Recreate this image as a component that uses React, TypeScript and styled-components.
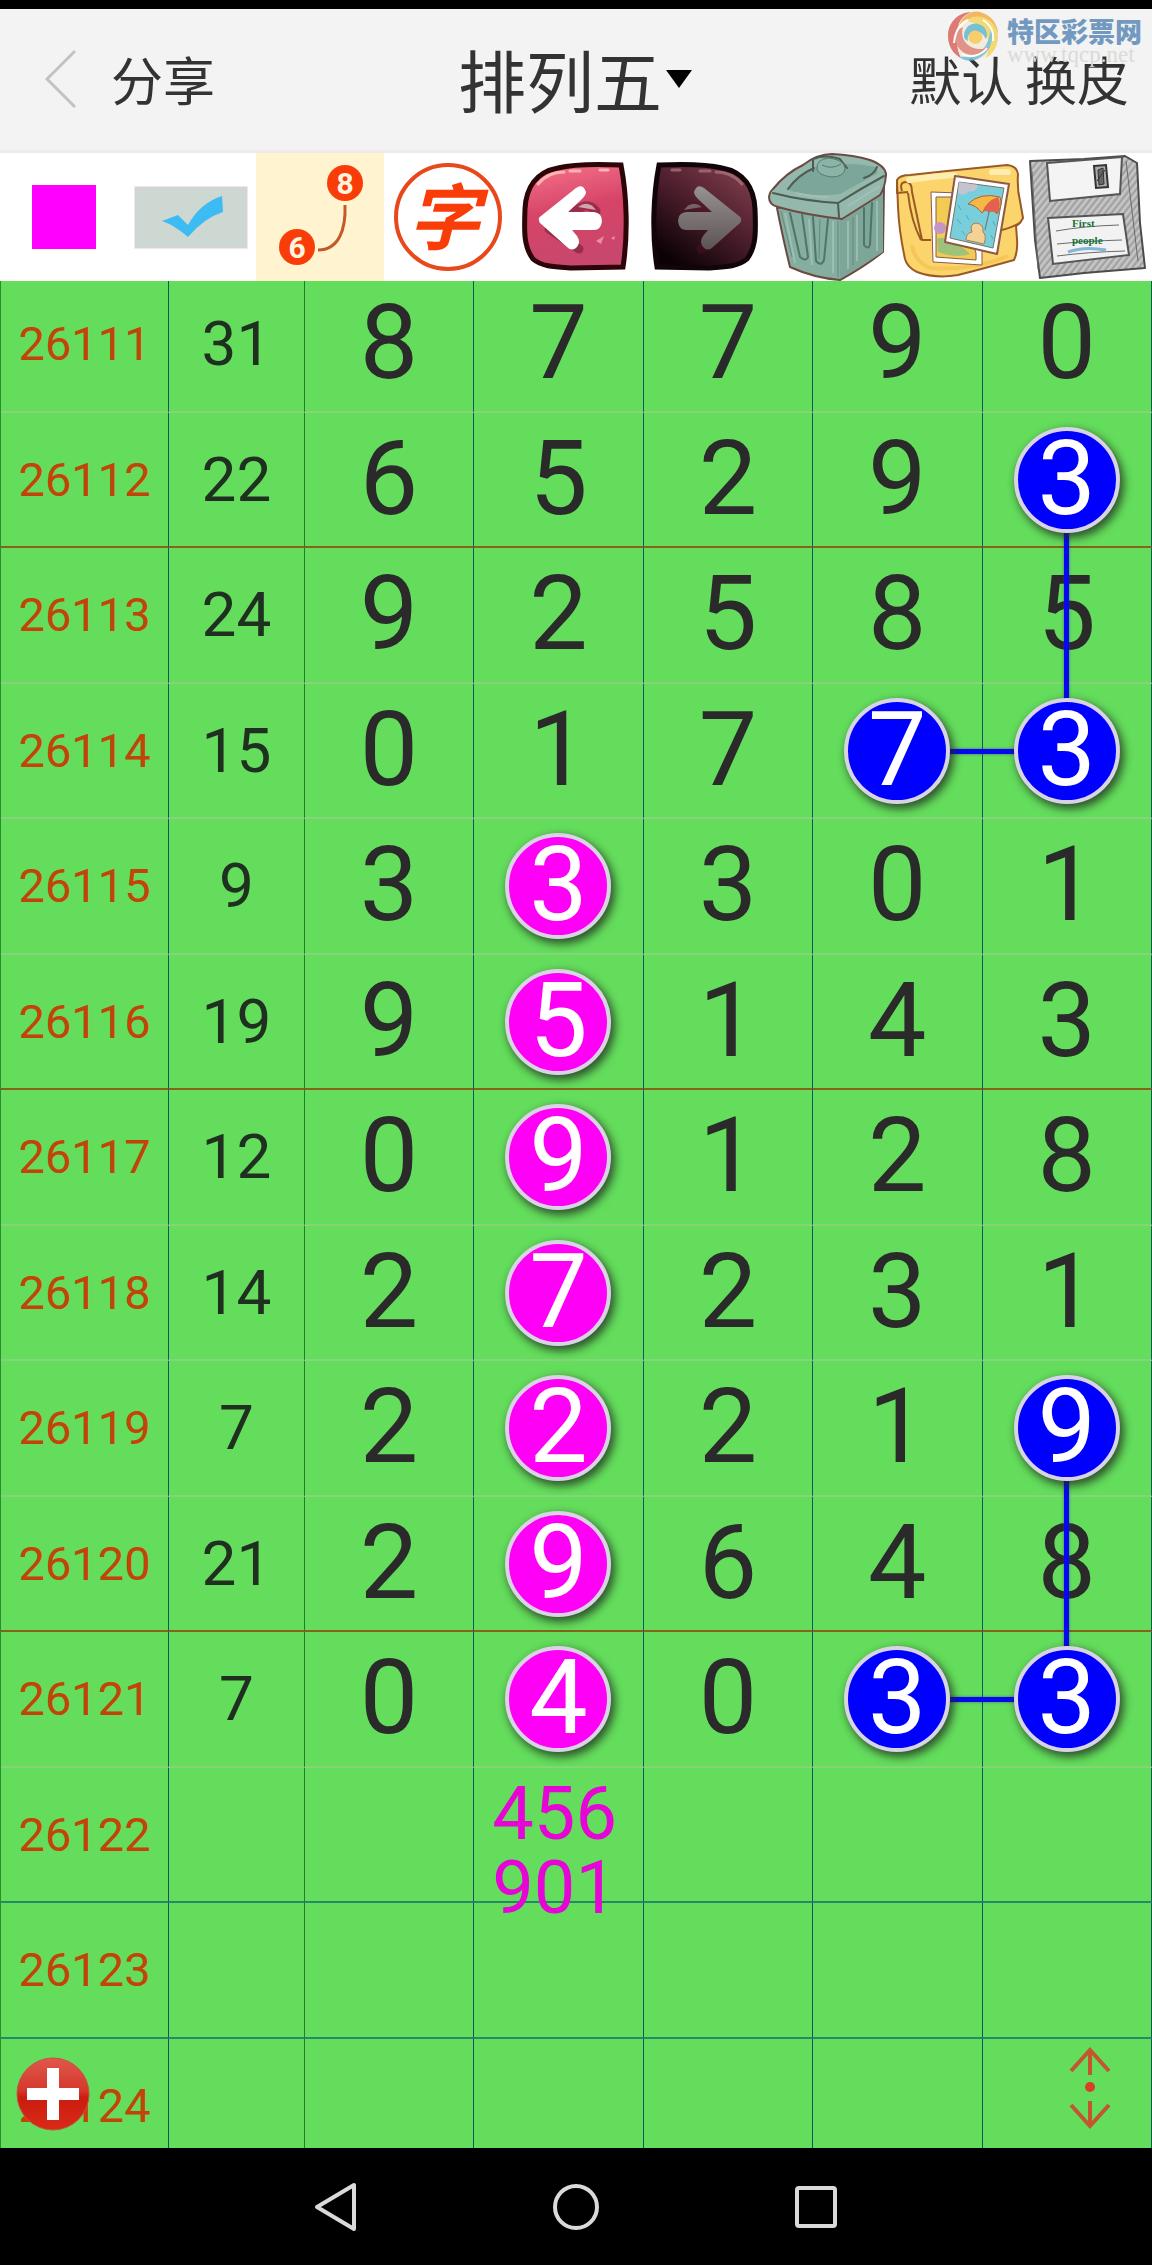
import React from "react";
import styled, { createGlobalStyle, css } from "styled-components";

const cjk = `"Noto Sans CJK SC", "Noto Sans", sans-serif`;
const numeric = `Roboto, "Noto Sans CJK SC", sans-serif`;

const GlobalStyle = createGlobalStyle`
  *, *::before, *::after { box-sizing: border-box; }
  html, body { margin: 0; background: #000; }
  button { margin: 0; padding: 0; border: 0; background: none; font: inherit; color: inherit; cursor: pointer; }
  svg { display: block; }
`;

const Screen = styled.div`
  display: flex;
  flex-direction: column;
  height: 100vh;
  padding-top: 9px;
  background: #000;
  color: #333;
  font-family: ${cjk};
`;

const Header = styled.header`
  position: relative;
  display: grid;
  grid-template-columns: 1fr auto 1fr;
  align-items: center;
  height: 144px;
  flex: none;
  padding: 0 23px 4px 45px;
  background: #f3f3f3;
  box-shadow: inset 0 -3px 0 #ebebeb;
  font-size: 52px;
  line-height: 64px;
`;

const HeaderSide = styled.div<{ $end?: boolean }>`
  display: flex;
  align-items: center;
  gap: 34px;
  justify-content: ${(p) => (p.$end ? "flex-end" : "flex-start")};
`;

const Title = styled.h1`
  margin: 0 24px 0 0;
  font-size: 68px;
  font-weight: 400;
  line-height: 80px;
`;

const TitleButton = styled.button`
  display: flex;
  align-items: center;
  gap: 4px;
`;

const Watermark = styled.div`
  position: absolute;
  top: 0;
  right: 10px;
  display: flex;
  gap: 8px;
  pointer-events: none;
`;

const WatermarkText = styled.div`
  display: flex;
  flex-direction: column;
  padding-top: 8px;
`;

const WatermarkName = styled.span`
  font-size: 27px;
  font-weight: 900;
  line-height: 28px;
  color: #7299bf;
`;

const WatermarkUrl = styled.span`
  font-family: "Liberation Serif", serif;
  font-size: 23px;
  line-height: 20px;
  color: #dadada;
`;

const Toolbar = styled.div`
  display: grid;
  grid-template-columns: repeat(9, 1fr);
  flex: none;
  background: #fff;
`;

const Tool = styled.button<{ $active?: boolean }>`
  background: ${(p) => (p.$active ? "#fff4cf" : "#fff")};
  svg { width: 100%; height: auto; }
`;

const Board = styled.main`
  position: relative;
  flex: 1;
  min-height: 0;
  overflow: hidden;
  background: #64dd5c;
  font-family: ${numeric};
`;

const Chart = styled.table`
  width: 100%;
  margin-top: -4px;
  table-layout: fixed;
  border-collapse: separate;
  border-spacing: 0;
  border-left: 1px solid #2a8f2a;
`;

const IssueCol = styled.col`
  width: 14.6%;
`;
const SumCol = styled.col`
  width: 11.8%;
`;

type Rule = "light" | "brown" | "teal";
const ruleColor: Record<Rule, string> = {
  light: "#86d37c",
  brown: "#85641a",
  teal: "#25896a",
};

const Row = styled.tr<{ $rule: Rule }>`
  height: 135px;
  &:nth-child(odd) { height: 136px; }
  > * { border-bottom: 2px solid ${(p) => ruleColor[p.$rule]}; }
`;

const cell = css`
  position: relative;
  padding: 0;
  text-align: center;
  vertical-align: middle;
  font-weight: 450;
  border-right: 1px solid #0f5a60;
`;

const Issue = styled.th`
  ${cell}
  font-size: 47px;
  line-height: 48px;
  color: #c24408;
`;

const Sum = styled.td`
  ${cell}
  font-size: 62px;
  line-height: 64px;
  color: #203020;
  border-right-color: #1f7d2b;
`;

const Digit = styled.td`
  ${cell}
  font-size: 104px;
  line-height: 104px;
  color: #2a2a2a;
`;

const Plain = styled.span`
  display: block;
  padding-bottom: 2px;
`;

const Ball = styled.span<{ $color: string }>`
  position: relative;
  z-index: 2;
  display: flex;
  justify-content: center;
  width: 106px;
  height: 106px;
  margin: 0 auto;
  border: 4px solid #d9d3e6;
  border-radius: 50%;
  background: ${(p) => p.$color};
  box-shadow: 3px 4px 8px 1px rgba(30, 40, 30, 0.75);
  color: #fff;
  line-height: 95px;
`;

const Link = styled.span<{ $dir: "down" | "right" }>`
  position: absolute;
  z-index: 1;
  background: #0808ee;
  box-shadow: 0 0 3px rgba(40, 60, 160, 0.7);
  ${(p) =>
    p.$dir === "down"
      ? css`top: 50%; left: calc(50% - 3px); width: 5px; height: 200%;`
      : css`left: 50%; top: calc(50% - 2px); height: 5px; width: 100%;`}
`;

const Note = styled.p`
  position: absolute;
  z-index: 2;
  top: 9px;
  left: 18px;
  margin: 0;
  text-align: left;
  font-size: 74px;
  line-height: 74px;
  color: #e604d6;
`;

const FloatingButton = styled.button<{ $side: "left" | "right" }>`
  position: absolute;
  z-index: 3;
  bottom: 16px;
  ${(p) => (p.$side === "left" ? css`left: 15px;` : css`right: 40px;`)}
`;

const NavBar = styled.nav`
  display: flex;
  flex: none;
  justify-content: center;
  align-items: center;
  height: 117px;
  background: #000;
`;

const NavButton = styled.button`
  display: flex;
  justify-content: center;
  align-items: center;
  width: 240px;
  height: 100%;
`;

type RowData = { issue: string; sum?: number; digits?: string };

const rows: RowData[] = [
  { issue: "26111", sum: 31, digits: "87790" },
  { issue: "26112", sum: 22, digits: "65293" },
  { issue: "26113", sum: 24, digits: "92585" },
  { issue: "26114", sum: 15, digits: "01773" },
  { issue: "26115", sum: 9, digits: "33301" },
  { issue: "26116", sum: 19, digits: "95143" },
  { issue: "26117", sum: 12, digits: "09128" },
  { issue: "26118", sum: 14, digits: "27231" },
  { issue: "26119", sum: 7, digits: "22219" },
  { issue: "26120", sum: 21, digits: "29648" },
  { issue: "26121", sum: 7, digits: "04033" },
  { issue: "26122" },
  { issue: "26123" },
  { issue: "26124" },
];

const MAGENTA = "#ff00f6";
const BLUE = "#0000ff";

const balls: Record<string, string> = {
  "26112:4": BLUE,
  "26114:3": BLUE,
  "26114:4": BLUE,
  "26115:1": MAGENTA,
  "26116:1": MAGENTA,
  "26117:1": MAGENTA,
  "26118:1": MAGENTA,
  "26119:1": MAGENTA,
  "26120:1": MAGENTA,
  "26121:1": MAGENTA,
  "26119:4": BLUE,
  "26121:3": BLUE,
  "26121:4": BLUE,
};

const links: Record<string, "down" | "right"> = {
  "26112:4": "down",
  "26114:3": "right",
  "26119:4": "down",
  "26121:3": "right",
};

const ruleFor = (i: number): Rule => (i > 10 ? "teal" : i % 4 === 1 ? "brown" : "light");

const SwirlLogo = () => (
  <svg width="52" height="54" viewBox="0 0 52 54" aria-hidden="true" opacity="0.85">
    <circle cx="26" cy="27" r="24" fill="#f6ead8" />
    <path d="M24 3C9 4 1 15 1 27c0 10 5 18 13 22-5-10-5-19 1-27C8 20 12 8 24 3Z" fill="#d9675e" />
    <path d="M12 17C15 7 24 1 33 3c12 3 18 13 18 22-4-10-11-16-21-16-8 0-14 3-18 8Z" fill="#f4ad4c" />
    <path d="M25 8c13-3 26 6 26 20 0 9-5 17-12 21 4-10 4-22-4-30-4-4-8-6-14-6Z" fill="#f3d55e" />
    <path d="M44 19c4 13-2 27-16 32-6 2-12 0-16-3 11 0 22-3 27-12 3-6 4-11 5-17Z" fill="#6fbfd2" />
    <path d="M9 22c-3 12 4 24 17 24 7 0 13-3 17-8-8 3-16 3-22-2-5-4-7-11-5-18Z" fill="#df8378" />
    <path d="M17 27c0-8 7-14 14-12 7 1 11 9 8 15-3-6-8-9-13-7-4 1-6 5-5 9-3-1-4-3-4-5Z" fill="#61b9cf" />
    <path d="M22 31c-2-6 3-11 8-9 5 1 7 6 4 10-3 4-9 4-12-1Z" fill="#f7c955" />
    <path d="M7 34c1-10 5-19 14-23M15 45c8 5 20 1 25-6M36 11c8 5 11 13 10 21" fill="none" stroke="#fff" strokeWidth="2" />
  </svg>
);

const Swatch = () => (
  <svg viewBox="0 0 128 128" aria-hidden="true">
    <rect x="32" y="32" width="64" height="64" fill="#ff00ff" />
  </svg>
);

const Tick = () => (
  <svg viewBox="0 0 128 128" aria-hidden="true">
    <rect x="8" y="35" width="110" height="59" fill="#ced8d2" stroke="#d3d3d8" strokeWidth="3" />
    <path d="M34 68 50 62 60 72Q72 50 94 43L95 59Q76 65 60 84Q46 72 34 68Z" fill="#3cbcf2" />
  </svg>
);

const LinkTool = () => (
  <svg viewBox="0 0 128 128" aria-hidden="true">
    <path d="M89 52C90 76 83 97 62 97" fill="none" stroke="#c45a2c" strokeWidth="3" />
    <g fill="#f93d08">
      <circle cx="89" cy="30" r="18" />
      <circle cx="41" cy="94" r="18" />
    </g>
    <g fill="#fff4e0" fontFamily="Roboto, sans-serif" fontWeight="700" fontSize="30" textAnchor="middle">
      <text x="89" y="41">8</text>
      <text x="41" y="105">6</text>
    </g>
  </svg>
);

const WordTool = () => (
  <svg viewBox="0 0 128 128" aria-hidden="true">
    <circle cx="64" cy="64" r="52" fill="#fff" stroke="#e8481a" strokeWidth="4" />
    <text
      x="60"
      y="91"
      fill="#f93d08"
      fontFamily="Noto Sans CJK SC, sans-serif"
      fontWeight="700"
      fontStyle="italic"
      fontSize="72"
      textAnchor="middle"
    >
      字
    </text>
  </svg>
);

const ArrowTool = ({ forward }: { forward?: boolean }) => {
  const id = forward ? "fwd" : "back";
  return (
    <svg viewBox="0 0 128 128" aria-hidden="true">
      <defs>
        <linearGradient id={`${id}-face`} x1="0" y1="0" x2={forward ? "0.7" : "0.2"} y2="1">
          <stop offset="0" stopColor={forward ? "#8a4552" : "#f8748c"} />
          <stop offset="0.5" stopColor={forward ? "#50202f" : "#d64468"} />
          <stop offset="1" stopColor={forward ? "#0c0205" : "#c8476c"} />
        </linearGradient>
        <linearGradient id={`${id}-arrow`} x1="0" y1="0" x2="0" y2="1">
          <stop offset="0" stopColor={forward ? "#979292" : "#fff"} />
          <stop offset="1" stopColor={forward ? "#5d5355" : "#fff"} />
        </linearGradient>
      </defs>
      <g transform={forward ? "translate(128 0) scale(-1 1)" : undefined}>
        <path
          d="M109 12C86 11 62 11 46 15C24 19 14 35 13 56C12 80 12 94 21 106C30 114 44 114 60 115L111 114C116 82 115 43 109 12Z"
          fill={`url(#${id}-face)`}
          stroke={forward ? "#120509" : "#2b0508"}
          strokeWidth="5"
        />
        <path d="M26 31Q36 19 52 19M58 18H68M88 17H96" fill="none" stroke={forward ? "#a87078" : "#ffc9bd"} strokeWidth="3" strokeLinecap="round" opacity="0.8" />
        <path d="M37 76 67 96M60 62Q74 46 84 58" fill="none" stroke="#531226" strokeWidth="9" strokeLinecap="round" opacity="0.45" />
        <path d="M66 54Q76 46 84 57Z" fill={forward ? "#756366" : "#cfa5ab"} />
        <path
          d="M27 67Q26 65 29 63L64 35Q71 30 74 39Q74 42 70 46L56 59H82Q90 60 90 68Q89 77 82 77H60L65 83Q69 89 65 94Q60 99 55 94L28 70Q27 69 27 67Z"
          fill={`url(#${id}-arrow)`}
        />
        {!forward && <path d="M84 88l8-5-3 8ZM99 85l4-2-1 4Z" fill="#ffa9b5" opacity="0.7" />}
      </g>
    </svg>
  );
};

const TrashTool = () => (
  <svg viewBox="0 0 128 128" aria-hidden="true">
    <g stroke="#6b4a42" strokeWidth="2" strokeLinejoin="round">
      <path d="M9 55Q16 90 22 114Q46 125 72 127Q96 114 115 99L116 32Z" fill="#85ada0" />
      <path d="M72 65V126L115 99V34Z" fill="#7da598" stroke="none" />
      <path d="M5 36Q18 20 35 12Q49 1 64 1Q86 2 102 7Q118 13 118 22Q117 35 112 42L74 66Q38 62 10 54Q1 52 1 44Q2 38 5 36Z" fill="#94b9ac" />
    </g>
    <path d="M20 37Q28 22 50 13Q80 8 108 14L110 20Q92 30 72 41Q44 45 20 37Z" fill="#7ca699" />
    <g fill="none" stroke="#4d5c52" strokeWidth="2" strokeLinecap="round" strokeLinejoin="round">
      <path d="M5 40Q36 48 70 50Q92 36 116 23M70 50 71 64M20 36Q30 22 46 15M109 14Q106 22 96 25" />
      <path d="M45 18V6Q58 1 72 6L79 15" />
    </g>
    <path d="M49 16Q48 6 61 5Q77 7 77 16Q76 24 63 24Q50 22 49 16Z" fill="#8bb3a7" stroke="#597a6e" strokeWidth="1" />
    <path d="M54 12Q64 17 73 11" fill="none" stroke="#597a6e" strokeWidth="1" />
    <g fill="none" stroke="#4f756a" strokeWidth="2" strokeLinecap="round">
      <path d="M22 60 32 104Q38 109 40 104L34 61M45 64 48 108Q53 114 56 107L60 66M96 55V92Q100 97 102 92L104 50" />
    </g>
    <g fill="none" stroke="#a5c6ba" strokeWidth="2" opacity="0.7">
      <path d="M17 60 27 110M41 66 44 112M65 68V120M80 68V116M89 62V108M109 48V98M80 53 112 33M28 40Q46 44 60 44" />
    </g>
    <path d="M70 68V124M85 64V112M13 58 24 104M52 66 51 106" fill="none" stroke="#64897e" strokeWidth="1" />
  </svg>
);

const PhotosTool = () => (
  <svg viewBox="0 0 128 128" aria-hidden="true">
    <g stroke="#9a5a26" strokeWidth="2" strokeLinejoin="round">
      <path d="M1 27Q4 22 14 22L51 18Q82 15 111 12Q121 13 122 21Q121 36 124 48L127 65Q124 71 120 73L121 86Q122 99 118 107Q86 116 62 122Q40 126 21 119Q11 114 9 106Q3 78 2 54Z" fill="#fbd56b" />
      <path d="M1 27Q0 34 1 40L12 39M6 38Q3 29 10 29Q16 29 16 39Q22 68 26 87L35 87M12 40Q15 68 25 87M106 77Q118 74 125 69" fill="none" />
    </g>
    <path d="M13 27Q40 23 58 22M96 19H112" fill="none" stroke="#ffedb0" strokeWidth="6" strokeLinecap="round" />
    <path d="M16 92Q18 108 34 115Q76 118 112 103" fill="none" stroke="#f3bd4b" strokeWidth="4" opacity="0.6" />
    <path d="M35 39 64 40 86 96 86 112 37 109Z" fill="#fff" stroke="#8c5a46" strokeWidth="1" />
    <path d="M40 44H62L80 100V107L40 104Z" fill="#f2cb52" stroke="#8c5a46" strokeWidth="1" />
    <circle cx="44" cy="75" r="6" fill="#c596c3" />
    <path d="M41 86Q48 82 54 91Q66 92 74 101Q60 106 42 99Z" fill="#9fc27a" />
    <path d="M59 23 113 31 101 101 49 89Z" fill="#fff" stroke="#8c5a46" strokeWidth="2" strokeLinejoin="round" />
    <path d="M63 29 108 35 97 95 54 85Z" fill="#79cedb" stroke="#7d7166" strokeWidth="1" />
    <path d="M63 29 82 32Q80 40 73 38Q68 44 62 40Z" fill="#c3c4d0" />
    <path d="M72 51Q84 39 104 44Q107 52 101 61Q97 56 93 59Q89 55 86 60Q80 52 72 51Z" fill="#f5b845" stroke="#a8643a" strokeWidth="1" />
    <path d="M102 44Q106 52 101 61Q97 56 93 59Q89 55 86 60Q90 48 102 44Z" fill="#e4614f" />
    <path d="M93 59 89 77" stroke="#6b6f68" strokeWidth="1" />
    <path d="M70 87Q70 80 76 79Q73 71 80 70Q88 71 87 79Q91 82 88 91Z" fill="#f4d195" stroke="#a9804d" strokeWidth="1" />
    <path d="M62 52l3 5M61 66l4 5M70 62l3 5M66 78l3 4M97 68l2 5M95 82l2 4" stroke="#4eabc0" strokeWidth="1" />
  </svg>
);

const DiskTool = () => (
  <svg viewBox="0 0 128 128" aria-hidden="true">
    <defs>
      <pattern id="hatch" width="5" height="5" patternUnits="userSpaceOnUse" patternTransform="rotate(38)">
        <rect width="5" height="5" fill="#bababa" />
        <path d="M1 0V5" stroke="#8a8a8a" strokeWidth="1" />
        <path d="M3 0V5" stroke="#d2d2d2" strokeWidth="1" />
      </pattern>
    </defs>
    <path d="M6 8 60 6 101 3 113 10 116 70 121 115 60 120 16 125 11 87Z" fill="url(#hatch)" stroke="#4c4c4c" strokeWidth="2" strokeLinejoin="round" />
    <path d="M23 10 98 4 96 41 26 48Z" fill="#f4f4f4" stroke="#555" strokeWidth="2" />
    <path d="M70 13 82 12 84 34 72 35Z" fill="#aaa" stroke="#333" strokeWidth="2" />
    <path d="M74 17 79 15 80 31 75 32ZM73 28 81 17" fill="#666" stroke="#333" strokeWidth="1" />
    <path d="M24 65 99 61 105 102 29 111Z" fill="#f2f2f2" stroke="#555" strokeWidth="2" />
    <path d="M32 78Q60 73 95 72M33 91Q62 88 98 87M33 103Q64 99 101 98M8 18 14 116M102 8 114 108" fill="none" stroke="#6a6a6a" strokeWidth="1" />
    <path d="M44 99Q60 93 82 97" fill="none" stroke="#84b5dd" strokeWidth="3" />
    <g fill="#14733a" fontFamily="Liberation Serif, serif" fontWeight="700" fontSize="11">
      <text x="48" y="74">First</text>
      <text x="48" y="91">people</text>
    </g>
  </svg>
);

const tools = [
  { name: "颜色", icon: <Swatch /> },
  { name: "确认", icon: <Tick /> },
  { name: "连线", icon: <LinkTool />, active: true },
  { name: "文字", icon: <WordTool /> },
  { name: "撤销", icon: <ArrowTool /> },
  { name: "重做", icon: <ArrowTool forward /> },
  { name: "清空", icon: <TrashTool /> },
  { name: "相册", icon: <PhotosTool /> },
  { name: "保存", icon: <DiskTool /> },
];

const positions = [0, 1, 2, 3, 4];

export default function App() {
  return (
    <>
      <GlobalStyle />
      <Screen>
        <Header>
          <HeaderSide>
            <button aria-label="返回">
              <svg width="32" height="60" viewBox="0 0 32 60" fill="none" stroke="#c2c2c2" strokeWidth="3">
                <path d="M30 2 2 30 30 58" />
              </svg>
            </button>
            <button>分享</button>
          </HeaderSide>
          <Title>
            <TitleButton>
              排列五
              <svg width="26" height="18" viewBox="0 0 26 18" aria-hidden="true">
                <path d="M0 0H26L13 18Z" fill="#000" />
              </svg>
            </TitleButton>
          </Title>
          <HeaderSide $end>
            <button>默认 换皮</button>
          </HeaderSide>
          <Watermark>
            <SwirlLogo />
            <WatermarkText>
              <WatermarkName>特区彩票网</WatermarkName>
              <WatermarkUrl>www.tqcp.net</WatermarkUrl>
            </WatermarkText>
          </Watermark>
        </Header>

        <Toolbar role="toolbar">
          {tools.map((t) => (
            <Tool key={t.name} aria-label={t.name} $active={t.active}>
              {t.icon}
            </Tool>
          ))}
        </Toolbar>

        <Board>
          <Chart>
            <colgroup>
              <IssueCol />
              <SumCol />
              {positions.map((p) => (
                <col key={p} />
              ))}
            </colgroup>
            <tbody>
              {rows.map((row, i) => (
                <Row key={row.issue} $rule={ruleFor(i)}>
                  <Issue scope="row">{row.issue}</Issue>
                  <Sum>{row.sum}</Sum>
                  {positions.map((p) => {
                    const key = `${row.issue}:${p}`;
                    const value = row.digits?.[p];
                    return (
                      <Digit key={p}>
                        {links[key] && <Link $dir={links[key]} />}
                        {value && (balls[key] ? <Ball $color={balls[key]}>{value}</Ball> : <Plain>{value}</Plain>)}
                        {key === "26122:1" && (
                          <Note>
                            456
                            <br />
                            901
                          </Note>
                        )}
                      </Digit>
                    );
                  })}
                </Row>
              ))}
            </tbody>
          </Chart>

          <FloatingButton $side="left" aria-label="添加">
            <svg width="76" height="76" viewBox="0 0 76 76">
              <defs>
                <linearGradient id="plus" x1="0" y1="0" x2="0" y2="1">
                  <stop offset="0" stopColor="#e0574c" />
                  <stop offset="0.45" stopColor="#d5382b" />
                  <stop offset="0.55" stopColor="#cb1d10" />
                  <stop offset="1" stopColor="#d92a18" />
                </linearGradient>
              </defs>
              <circle cx="38" cy="38" r="36" fill="url(#plus)" stroke="#c8503c" strokeWidth="1" />
              <path d="M32 12H44V32H64V44H44V64H32V44H12V32H32Z" fill="#fff" />
            </svg>
          </FloatingButton>
          <FloatingButton $side="right" aria-label="滚动">
            <svg width="44" height="88" viewBox="0 0 44 88" fill="none" stroke="#c2572f" strokeWidth="4">
              <path d="M3 27 22 6 41 27M22 6V31M3 61 22 82 41 61M22 82V57" />
              <circle cx="22" cy="43" r="5" fill="#d83f27" stroke="none" />
            </svg>
          </FloatingButton>
        </Board>

        <NavBar>
          <NavButton aria-label="后退">
            <svg width="46" height="50" viewBox="0 0 46 50" fill="none" stroke="#dadada" strokeWidth="4" strokeLinejoin="round">
              <path d="M4 25 41 3V47Z" />
            </svg>
          </NavButton>
          <NavButton aria-label="主页">
            <svg width="48" height="50" viewBox="0 0 48 50" fill="none" stroke="#dadada" strokeWidth="4">
              <circle cx="24" cy="25" r="21" />
            </svg>
          </NavButton>
          <NavButton aria-label="最近任务">
            <svg width="44" height="44" viewBox="0 0 44 44" fill="none" stroke="#dadada" strokeWidth="4">
              <rect x="3" y="3" width="38" height="38" rx="2" />
            </svg>
          </NavButton>
        </NavBar>
      </Screen>
    </>
  );
}
